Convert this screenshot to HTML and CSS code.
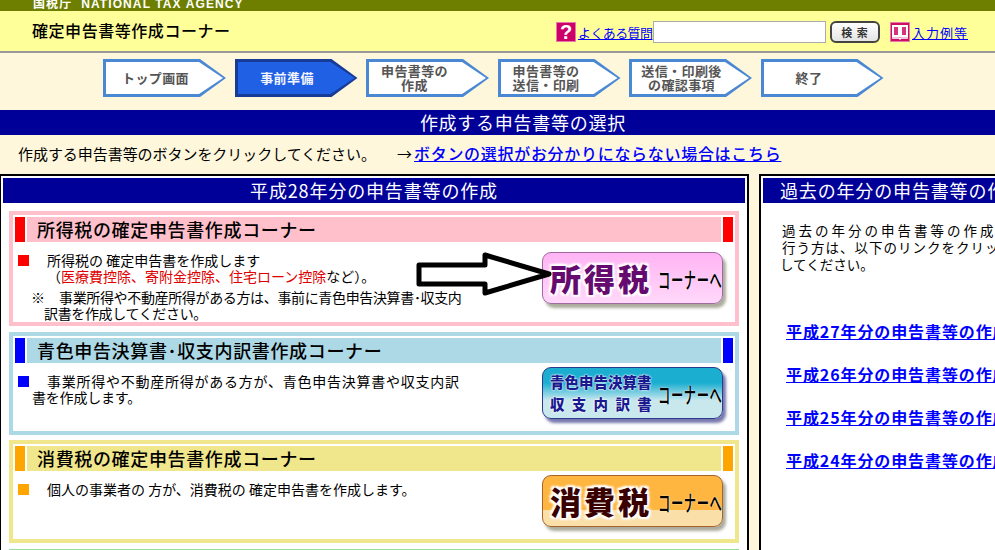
FILE: index.html
```html
<!DOCTYPE html>
<html lang="ja">
<head>
<meta charset="utf-8">
<title>確定申告書等作成コーナー</title>
<link rel="stylesheet" href="styles.css">
</head>
<body>
<div class="page">
  <div class="agency"><span>国税庁&nbsp; NATIONAL TAX AGENCY</span></div>
  <header class="head">
    <div class="head-title">確定申告書等作成コーナー</div>
    <div class="head-tools">
      <span class="icon-q">?</span>
      <a class="head-link faq" href="#">よくある質問</a>
      <input class="search" type="text">
      <button class="search-btn" type="button">検 索</button>
      <svg class="icon-book" viewBox="0 0 20 20"><rect x=".5" y=".5" width="19" height="19" fill="#cc0f66" stroke="#e878a8"/><path d="M3 4h6v10H3zM11 4h6v10h-6z" fill="#d8347e" stroke="#fff" stroke-width="2"/><path d="M2 16h7l1 1 1-1h7" fill="none" stroke="#fff" stroke-width="1.500"/></svg>
      <a class="head-link example" href="#">入力例等</a>
    </div>
  </header>
  <nav class="steps">
    <div class="step"><div class="step-in">トップ画面</div></div>
    <div class="step active"><div class="step-in">事前準備</div></div>
    <div class="step"><div class="step-in shift">申告書等の<br>作成</div></div>
    <div class="step"><div class="step-in shift">申告書等の<br>送信・印刷</div></div>
    <div class="step"><div class="step-in">送信・印刷後<br>の確認事項</div></div>
    <div class="step"><div class="step-in shift">終了</div></div>
  </nav>
  <h1 class="main-title">作成する申告書等の選択</h1>
  <p class="lead"><span class="lead-text">作成する申告書等のボタンをクリックしてください。</span><span class="lead-arrow">→</span><a href="#">ボタンの選択がお分かりにならない場合はこちら</a></p>
  <main class="panels">
    <section class="panel panel-left">
      <h2 class="panel-title">平成28年分の申告書等の作成</h2>
      <article class="corner pink">
        <div class="corner-head"><i class="mark"></i><h3>所得税の確定申告書作成コーナー</h3><i class="mark"></i></div>
        <div class="corner-body">
          <div class="corner-text">
            <div class="row"><i class="bullet"></i><div class="row-text">所得税の 確定申告書を作成します<br>（<em>医療費控除、寄附金控除、住宅ローン控除</em>など）。</div></div>
            <div class="note"><div class="note-first"><span class="note-mark">※</span>事業所得や不動産所得がある方は、事前に青色申告決算書･収支内</div><div class="note-second">訳書を作成してください。</div></div>
          </div>
          <a class="btn btn-pink" href="#"><span class="btn-big">所得税</span><span class="btn-small">コーナーへ</span></a>
        </div>
        <svg class="arrow" viewBox="0 0 140 48"><path d="M3 13H69V3L133 22 69 41V32H3Z" fill="#fff" stroke="#000" stroke-width="5" stroke-linejoin="round"/></svg>
      </article>
      <article class="corner blue">
        <div class="corner-head"><i class="mark"></i><h3>青色申告決算書･収支内訳書作成コーナー</h3><i class="mark"></i></div>
        <div class="corner-body">
          <div class="corner-text">
            <div class="row"><i class="bullet"></i><div class="row-text wrap">事業所得や不動産所得がある方が、青色申告決算書や収支内訳<br><span class="wrap-second">書を作成します。</span></div></div>
          </div>
          <a class="btn btn-blue" href="#"><span class="btn-two"><span>青色申告決算書</span><span class="spread">収支内訳書</span></span><span class="btn-small">コーナーへ</span></a>
        </div>
      </article>
      <article class="corner gold">
        <div class="corner-head"><i class="mark"></i><h3>消費税の確定申告書作成コーナー</h3><i class="mark"></i></div>
        <div class="corner-body">
          <div class="corner-text">
            <div class="row"><i class="bullet"></i><div class="row-text">個人の事業者の 方が、消費税の 確定申告書を作成します。</div></div>
          </div>
          <a class="btn btn-orange" href="#"><span class="btn-big">消費税</span><span class="btn-small">コーナーへ</span></a>
        </div>
      </article>
      <div class="corner green"></div>
    </section>
    <section class="panel panel-right">
      <h2 class="panel-title">過去の年分の申告書等の作成</h2>
      <p class="past-text"><span class="past-wide">過去の年分の申告書等の作成を</span><br><span class="past-mid">行う方は、以下のリンクをクリック</span><br><span class="past-last">してください。</span></p>
      <ul class="past-links">
        <li><a href="#">平成27年分の申告書等の作成</a></li>
        <li><a href="#">平成26年分の申告書等の作成</a></li>
        <li><a href="#">平成25年分の申告書等の作成</a></li>
        <li><a href="#">平成24年分の申告書等の作成</a></li>
      </ul>
    </section>
  </main>
</div>
</body>
</html>
```
FILE: styles.css
```css
html, body {
  margin: 0;
  height: 550px;
  overflow: hidden;
  background: #fff7dc;
}
body, input, button {
  font-family: "Noto Sans CJK JP", "Liberation Sans", sans-serif;
}
.page {
  width: 1046px;
  color: #000;
}
a { color: #0000ff; }
.agency {
  height: 11px;
  overflow: hidden;
  background: #6e7f00;
  color: #fff;
  padding-left: 33px;
  font: 700 12px/8px "Liberation Sans", "Noto Sans CJK JP", sans-serif;
  letter-spacing: 1.100px;
}
.agency span { display: block; }
.head {
  box-sizing: border-box;
  width: 995px;
  height: 42px;
  background: #ffff99;
  border-bottom: 2px solid #999;
  display: flex;
  align-items: center;
  justify-content: space-between;
  padding: 0 27px 0 32px;
}
.head-title {
  font-size: 16px;
  font-weight: 500;
  letter-spacing: .550px;
  line-height: 36px;
  height: 38px;
}
.head-tools {
  display: flex;
  align-items: center;
  padding-top: 1px;
}
.icon-q {
  box-sizing: border-box;
  width: 20px;
  height: 20px;
  background: #cc0066;
  border: 1px solid #e878a8;
  color: #fff;
  font: 700 20px/18px "Liberation Sans", sans-serif;
  text-align: center;
  margin-right: 2px;
}
.head-link {
  font-size: 13px;
  line-height: 20px;
  padding-top: 3px;
}
.example { letter-spacing: 1px; }
.faq { letter-spacing: -.600px; width: 74px; white-space: nowrap; }
.search {
  box-sizing: border-box;
  width: 173px;
  height: 22px;
  border: 1px solid #aaa;
  background: #fff;
  margin: 0 4px 0 1px;
  padding: 0;
}
.search-btn {
  box-sizing: border-box;
  width: 50px;
  height: 22px;
  border: 2px solid #444;
  border-radius: 6px;
  background: linear-gradient(#fff, #e4e4e4);
  font-size: 11px;
  font-weight: 700;
  letter-spacing: 1px;
  color: #333;
  padding: 0;
  margin-right: 10px;
}
.icon-book {
  width: 20px;
  height: 20px;
  margin-right: 2px;
}

.steps {
  display: flex;
  gap: 8.500px;
  padding: 6px 0 13px 103px;
  height: 38px;
}
.step {
  width: 123px;
  height: 38px;
  padding: 3px;
  box-sizing: border-box;
  background: #4a88d4;
  clip-path: polygon(0 0, 97px 0, 123px 50%, 97px 100%, 0 100%);
}
.step-in {
  height: 32px;
  background: #fff;
  clip-path: polygon(0 0, 93px 0, 117px 50%, 93px 100%, 0 100%);
  display: flex;
  align-items: center;
  justify-content: center;
  text-align: center;
  padding-right: 18px;
  font-size: 13px;
  font-weight: 700;
  line-height: 14px;
  letter-spacing: .400px;
  color: #555;
  white-space: nowrap;
}
.step-in.shift { padding-right: 26px; }
.step.active { background: #173c98; }
.step.active .step-in {
  background: #1f60e4;
  color: #f2f4ff;
}
.main-title {
  margin: 0;
  height: 25px;
  background: #000099;
  color: #fff;
  text-align: center;
  font-size: 18px;
  font-weight: 400;
  line-height: 24px;
  letter-spacing: .750px;
}
.lead {
  margin: 0;
  height: 39px;
  padding-left: 18px;
  font-size: 15px;
  line-height: 37px;
  display: flex;
  white-space: nowrap;
}
.lead-text { width: 379px; letter-spacing: -.050px; }
.lead-arrow { width: 17px; }
.lead a {
  font-size: 16px;
  font-weight: 500;
  letter-spacing: .700px;
}
.panels {
  display: flex;
  gap: 10px;
}
.panel {
  box-sizing: border-box;
  flex: none;
  height: 400px;
  border: 2px solid #000;
  background: #fff;
  padding: 2px;
}
.panel-left { width: 750px; margin-left: -1px; }
.panel-right { width: 287px; }
.panel-title {
  margin: 0;
  height: 25px;
  background: #000099;
  color: #fff;
  text-align: center;
  font-size: 18px;
  font-weight: 400;
  line-height: 24px;
  letter-spacing: .850px;
  white-space: nowrap;
}
.corner {
  position: relative;
  box-sizing: border-box;
  width: 730px;
  margin: 0 0 6px 6px;
  border: 4px solid;
  padding: 2px;
}
.panel-title + .corner { margin-top: 8px; }
.corner.pink { height: 115px; border-color: #ffc0cb; --tone: #ffc0cb; --mark: #ff0000; }
.corner.blue { height: 103px; margin-bottom: 5px; border-color: #add8e6; --tone: #add8e6; --mark: #0000ff; }
.corner.gold { height: 103px; border-color: #f0e68c; --tone: #f0e68c; --mark: #ffa500; }
.corner.green { height: 60px; border-color: #98e098; }
.corner-head {
  display: flex;
  gap: 2px;
  height: 25px;
}
.mark {
  flex: none;
  width: 10px;
  background: var(--mark);
}
.corner-head h3 {
  flex: 1;
  margin: 0;
  background: var(--tone);
  padding-left: 10px;
  font-size: 18px;
  font-weight: 500;
  line-height: 24px;
  letter-spacing: .650px;
  white-space: nowrap;
}
.corner-body {
  display: flex;
  justify-content: space-between;
  padding: 10px 10px 0 3px;
}
.corner-text {
  font-size: 14px;
  line-height: 16px;
  white-space: nowrap;
}
.row { display: flex; }
.bullet {
  flex: none;
  width: 11px;
  height: 11px;
  margin-top: 3px;
  background: var(--mark);
}
.row-text { margin-left: 18px; letter-spacing: 0; }
.row-text em { color: #e00000; font-style: normal; }
.wrap { letter-spacing: .750px; }
.wrap-second { margin-left: -15px; letter-spacing: -.200px; }
.note { margin: 5px 0 0 13px; letter-spacing: -.350px; }
.note-first { display: flex; }
.note-mark { width: 28px; }
.note-second { margin-left: 13px; }
.btn {
  flex: none;
  box-sizing: border-box;
  width: 181px;
  height: 52px;
  border-radius: 9px;
  display: flex;
  align-items: center;
  padding-left: 7px;
  color: #000;
  text-decoration: none;
  border: 1px solid;
  box-shadow: 3px 4px 3px rgba(70, 70, 40, .45);
  white-space: nowrap;
}
.btn-pink {
  border-color: #a06aa0;
  background: linear-gradient(#ffb4f4, #ffd8fa);
}
.btn-blue {
  margin-top: -6px;
  border-color: #2a3a8c;
  background: linear-gradient(#1caed0 30%, #c8e8ee 65%);
  box-shadow: 3px 4px 3px rgba(30, 30, 120, .6);
}
.btn-orange {
  margin-top: -6px;
  border-color: #a8622c;
  background: linear-gradient(#ffb640 68%, #fbdfa8 68%);
}
.btn-big {
  width: 108px;
  font-size: 31px;
  font-weight: 900;
  letter-spacing: 3px;
  line-height: 40px;
  color: #650a6e;
  text-shadow: 0 0 2px #fff, 0 0 3px #fff, 2px 2px 2px #fff, -2px -2px 2px #fff, 2px -2px 2px #fff, -2px 2px 2px #fff;
}
.btn-orange .btn-big { color: #3a0000; }
.btn-small {
  display: inline-block;
  width: 62px;
  font-size: 22px;
  font-weight: 500;
  letter-spacing: 1px;
  line-height: 24px;
  transform: scaleX(.56);
  transform-origin: left center;
  text-shadow: 0 0 2px #fff;
}
.btn-two {
  width: 108px;
  display: flex;
  flex-direction: column;
  font-size: 14.500px;
  font-weight: 900;
  line-height: 22px;
  color: #1a1a90;
  text-shadow: 0 0 2px #fff, 0 0 2px #fff;
}
.spread { letter-spacing: 7.300px; }
.past-text {
  margin: 19px 0 0 19px;
  font-size: 13.500px;
  line-height: 17px;
  white-space: nowrap;
}
.past-wide { letter-spacing: 3px; }
.past-mid { letter-spacing: 1px; }
.past-last { margin-left: -2px; }
.past-links {
  list-style: none;
  margin: 46px 0 0 23px;
  padding: 0;
  white-space: nowrap;
}
.past-links li {
  height: 43px;
  font-size: 16px;
  font-weight: 700;
  line-height: 24px;
  letter-spacing: .900px;
}
.arrow {
  position: absolute;
  left: 403px;
  top: 37px;
  width: 140px;
  height: 48px;
}
```
